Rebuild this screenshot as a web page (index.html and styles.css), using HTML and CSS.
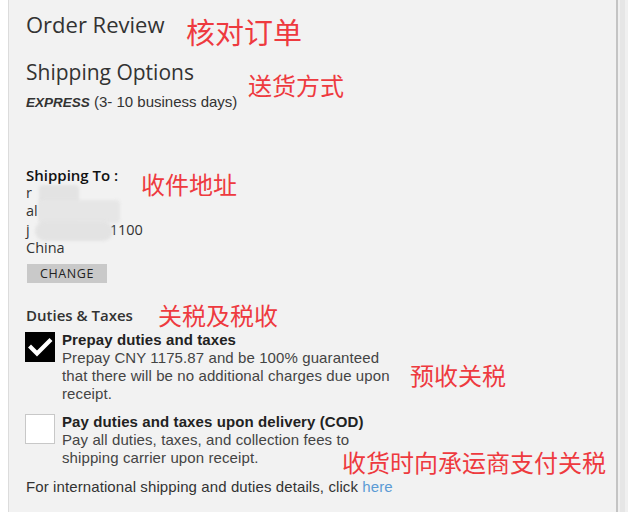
FILE: index.html
```html
<!DOCTYPE html>
<html>
<head>
<meta charset="utf-8">
<link rel="stylesheet" href="styles.css">
</head>
<body>
<div class="page">
  <div class="gutter"></div>
  <div class="panel">
    <h1 class="title">Order Review</h1>
    <h2 class="subtitle">Shipping Options</h2>
    <p class="express"><b><i>EXPRESS</i></b> (3- 10 business days)</p>

    <div class="shipto">
      <div class="label">Shipping To :</div>
      <div class="addr">
        <div>r</div>
        <div>al</div>
        <div>j<span class="gap">1100</span></div>
        <div>China</div>
        <span class="blur b1"></span>
        <span class="blur b2"></span>
        <span class="blur b3"></span>
      </div>
      <button class="change">CHANGE</button>
    </div>

    <div class="duties">
      <div class="label">Duties &amp; Taxes</div>
      <div class="option">
        <span class="box checked">
          <svg viewBox="0 0 30 30" width="30" height="30"><path d="M6 15.5 L12 21.5 L24.5 9" fill="none" stroke="#fff" stroke-width="4.2" stroke-linecap="square"/></svg>
        </span>
        <div class="opt-text">
          <div class="opt-title">Prepay duties and taxes</div>
          <div class="opt-desc">Prepay CNY 1175.87 and be 100% guaranteed<br>that there will be no additional charges due upon<br>receipt.</div>
        </div>
      </div>
      <div class="option second">
        <span class="box"></span>
        <div class="opt-text">
          <div class="opt-title">Pay duties and taxes upon delivery (COD)</div>
          <div class="opt-desc">Pay all duties, taxes, and collection fees to<br>shipping carrier upon receipt.</div>
        </div>
      </div>
      <p class="info">For international shipping and duties details, click <a href="#">here</a></p>
    </div>

    <span class="note n1">核对订单</span>
    <span class="note n2">送货方式</span>
    <span class="note n3">收件地址</span>
    <span class="note n4">关税及税收</span>
    <span class="note n5">预收关税</span>
    <span class="note n6">收货时向承运商支付关税</span>
  </div>
  <div class="scroll"><div class="track"></div></div>
</div>
</body>
</html>
```
FILE: styles.css
```css
html, body {
  margin: 0;
  padding: 0;
  background: #ffffff;
}
.page {
  display: flex;
  width: 628px;
  height: 512px;
  overflow: hidden;
}
.gutter {
  width: 8px;
  background: #ffffff;
}
.panel {
  position: relative;
  width: 610px;
  height: 512px;
  background: #f2f2f2;
  border-left: 1px solid #dcdcdc;
  border-right: 2px solid #c4c4c4;
  padding-left: 17px;
  box-sizing: border-box;
  color: #222;
}
.scroll {
  flex: 1;
  background: #f0f0f0;
  display: flex;
  padding-left: 2px;
}
.track {
  width: 5px;
  background: #e6e6e6;
}
.title {
  margin: 0;
  padding-top: 9px;
  font-family: "Open Sans", sans-serif;
  font-weight: 400;
  font-size: 22px;
  line-height: 30px;
  color: #333;
}
.subtitle {
  margin: 20px 0 0 0;
  font-family: "Open Sans", sans-serif;
  font-weight: 400;
  font-size: 21px;
  line-height: 26px;
  color: #333;
}
.express {
  margin: 8px 0 0 0;
  font-family: "Liberation Sans", Arial, sans-serif;
  font-size: 15px;
  line-height: 18px;
  color: #333;
}
.express b {
  font-size: 13.5px;
}
.shipto {
  margin-top: 54px;
}
.label {
  font-family: "Open Sans", sans-serif;
  font-weight: 600;
  font-size: 15px;
  line-height: 18px;
  color: #111;
}
.addr {
  position: relative;
  font-family: "Open Sans", sans-serif;
  font-size: 14.5px;
  line-height: 18.3px;
  color: #333;
}
.gap {
  margin-left: 80px;
}
.blur {
  position: absolute;
  background: #e3e3e3;
  border-radius: 4px;
  filter: blur(1.5px);
}
.b1 { left: 13px; top: 1px; width: 40px; height: 38px; }
.b2 { left: 13px; top: 16px; width: 81px; height: 23px; background: #e6e6e6; }
.b3 { left: 9px; top: 37px; width: 78px; height: 20px; border-radius: 10px; }
.change {
  display: block;
  margin: 7px 0 0 1px;
  width: 80px;
  height: 19px;
  padding: 0;
  border: none;
  background: #c9c9c9;
  font-family: "Open Sans", sans-serif;
  font-size: 12.5px;
  letter-spacing: 0.6px;
  color: #222;
}
.duties {
  margin-top: 23px;
}
.duties .label {
  font-weight: 600;
  color: #333;
}
.option {
  display: flex;
  gap: 7px;
  margin-top: 8px;
}
.option.second {
  margin-top: 11px;
}
.box {
  flex: none;
  width: 30px;
  height: 30px;
  box-sizing: border-box;
  background: #fff;
  border: 1px solid #c8c8c8;
  margin-left: -1px;
}
.box.checked {
  background: #000;
  border: none;
}
.box svg { display: block; }
.opt-text {
  font-family: "Liberation Sans", Arial, sans-serif;
  font-size: 15px;
  letter-spacing: 0.1px;
  line-height: 18px;
  color: #444;
  margin-top: -1px;
}
.opt-title {
  font-weight: 700;
  color: #222;
}
.info {
  margin: 11px 0 0 0;
  font-family: "Liberation Sans", Arial, sans-serif;
  font-size: 15px;
  letter-spacing: 0.1px;
  line-height: 18px;
  color: #333;
}
.info a {
  color: #5b9bd5;
  text-decoration: none;
}
.note {
  position: absolute;
  font-family: "Noto Sans CJK SC", sans-serif;
  color: #ee3a3f;
  font-size: 24px;
  line-height: 24px;
  white-space: nowrap;
}
.n1 { left: 177px; top: 16px; font-size: 29px; line-height: 30px; }
.n2 { left: 239px; top: 73px; }
.n3 { left: 132px; top: 172px; }
.n4 { left: 149px; top: 303px; }
.n5 { left: 401px; top: 363px; }
.n6 { left: 333px; top: 450px; }
```
